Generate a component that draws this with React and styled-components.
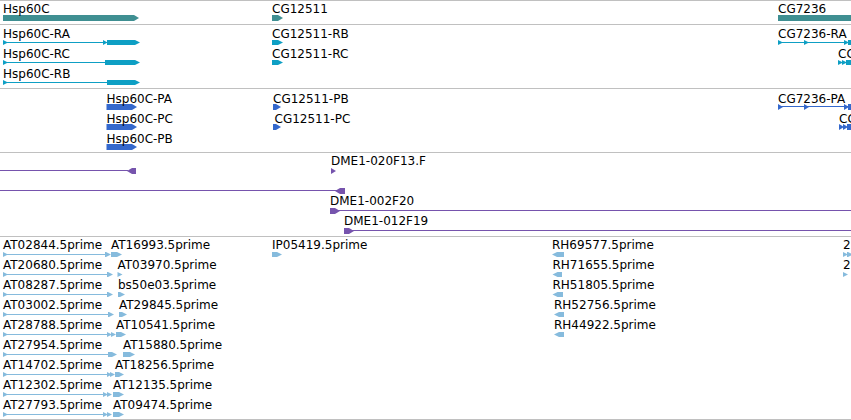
import React from "react";
import styled, { createGlobalStyle } from "styled-components";

const GlobalStyle = createGlobalStyle`
  html, body { margin: 0; padding: 0; background: #ffffff; }
  body { font-family: "DejaVu Sans", Verdana, sans-serif; }
`;

const Browser = styled.main`
  width: 851px;
  height: 420px;
  display: flex;
  flex-direction: column;
  overflow: hidden;
  background: #ffffff;
`;

const Track = styled.section`
  position: relative;
  flex: 0 0 ${(p) => p.$h}px;
  box-sizing: border-box;
  border-top: 1px solid #c0c0c0;
  border-bottom: ${(p) => (p.$last ? "1px solid #c0c0c0" : "none")};
  overflow: hidden;
`;

const GlyphLayer = styled.svg`
  position: absolute;
  left: 0;
  top: 0;
  width: 100%;
  height: 100%;
  display: block;
  overflow: hidden;
`;

const FeatureLabel = styled.span`
  position: absolute;
  font-family: "DejaVu Sans", Verdana, sans-serif;
  font-size: 12px;
  line-height: 14px;
  color: #000000;
  white-space: nowrap;
`;

const ROW = 20;

const TRACKS = [
  {
    id: "gene",
    height: 24,
    color: "#3f8f92",
    row0: 18,
    rise: 14,
    h: 6,
    features: [
      { label: "Hsp60C", row: 0, exons: [[3, 139, "r"]] },
      { label: "CG12511", row: 0, exons: [[272, 283, "r"]] },
      { label: "CG7236", row: 0, exons: [[778, 860, "r"]] },
    ],
  },
  {
    id: "transcript",
    height: 64,
    color: "#0e9fc4",
    row0: 18.5,
    rise: 13.3,
    h: 5,
    features: [
      { label: "Hsp60C-RA", row: 0, line: [3, 107], exons: [[3, 8, "r"], [103, 107.5, "r"], [107, 140, "r"]] },
      { label: "Hsp60C-RC", row: 1, line: [3, 105], exons: [[3, 8, "r"], [105, 140, "r"]] },
      { label: "Hsp60C-RB", row: 2, line: [3, 107], exons: [[3, 8, "r"], [107, 140, "r"]] },
      { label: "CG12511-RB", row: 0, exons: [[272, 283, "r"]] },
      { label: "CG12511-RC", row: 1, exons: [[272, 283, "r"]] },
      { label: "CG7236-RA", row: 0, line: [778, 851], exons: [[778, 783, "r"], [804, 809, "r"], [844, 849, "r"], [848, 860, "r"]] },
      { label: "CG7236-RB", row: 1, exons: [[838, 843, "r"], [842, 847, "r"], [846, 860, "r"]] },
    ],
  },
  {
    id: "protein",
    height: 64,
    color: "#3468cc",
    row0: 19,
    rise: 12.6,
    h: 6,
    features: [
      { label: "Hsp60C-PA", row: 0, exons: [[106.5, 137, "r"]] },
      { label: "Hsp60C-PC", row: 1, exons: [[106.5, 137, "r"]] },
      { label: "Hsp60C-PB", row: 2, exons: [[106.5, 137, "r"]] },
      { label: "CG12511-PB", row: 0, exons: [[273, 281, "r"]] },
      { label: "CG12511-PC", row: 1, lx: 274.5, exons: [[273, 281, "r"]] },
      { label: "CG7236-PA", row: 0, line: [778, 851], exons: [[778, 783, "r"], [804, 809, "r"], [844, 849, "r"], [848, 860, "r"]] },
      { label: "CG7236-PB", row: 1, exons: [[839, 844, "r"], [843, 848, "r"], [847, 860, "r"]] },
    ],
  },
  {
    id: "clone",
    height: 84,
    color: "#7654ad",
    row0: 19,
    rise: 15,
    h: 6,
    features: [
      { row: 0, line: [-5, 128], exons: [[127, 136, "l"]] },
      { label: "DME1-020F13.F", row: 0, exons: [[331, 336, "r"]] },
      { row: 1, line: [-5, 340], exons: [[335, 345, "l"]] },
      { label: "DME1-002F20", row: 2, line: [338, 860], exons: [[330, 340, "r"]] },
      { label: "DME1-012F19", row: 3, line: [352, 860], exons: [[344, 354, "r"]] },
    ],
  },
  {
    id: "est",
    height: 184,
    last: true,
    color: "#86bbdd",
    row0: 18.5,
    rise: 14.6,
    h: 5,
    features: [
      { label: "AT02844.5prime", row: 0, line: [3, 107], exons: [[3, 8, "r"], [105, 111, "r"]] },
      { label: "AT16993.5prime", row: 0, exons: [[111, 122, "r"]] },
      { label: "AT20680.5prime", row: 1, line: [3, 107], exons: [[3, 8, "r"], [107, 113, "r"]] },
      { label: "AT03970.5prime", row: 1, exons: [[117.5, 122.5, "r"]] },
      { label: "AT08287.5prime", row: 2, line: [3, 107], exons: [[3, 8, "r"], [107, 113, "r"]] },
      { label: "bs50e03.5prime", row: 2, exons: [[118, 125, "r"]] },
      { label: "AT03002.5prime", row: 3, line: [3, 108], exons: [[3, 8, "r"], [108, 114, "r"]] },
      { label: "AT29845.5prime", row: 3, exons: [[119, 127, "r"]] },
      { label: "AT28788.5prime", row: 4, line: [3, 107], exons: [[3, 8, "r"], [107, 112, "r"], [111, 116, "r"]] },
      { label: "AT10541.5prime", row: 4, exons: [[116, 126, "r"]] },
      { label: "AT27954.5prime", row: 5, line: [3, 108], exons: [[3, 8, "r"], [108, 117, "r"]] },
      { label: "AT15880.5prime", row: 5, exons: [[123, 135, "r"]] },
      { label: "AT14702.5prime", row: 6, line: [3, 107], exons: [[3, 8, "r"], [107, 112, "r"], [110, 115, "r"]] },
      { label: "AT18256.5prime", row: 6, exons: [[115, 124, "r"]] },
      { label: "AT12302.5prime", row: 7, line: [3, 103], exons: [[3, 8, "r"], [103, 108, "r"], [107, 112, "r"]] },
      { label: "AT12135.5prime", row: 7, exons: [[113, 124, "r"]] },
      { label: "AT27793.5prime", row: 8, line: [3, 103], exons: [[3, 8, "r"], [103, 108, "r"], [107, 112, "r"]] },
      { label: "AT09474.5prime", row: 8, exons: [[113, 124, "r"]] },
      { label: "IP05419.5prime", row: 0, exons: [[272, 282, "r"]] },
      { label: "RH69577.5prime", row: 0, exons: [[552, 564, "l"]] },
      { label: "RH71655.5prime", row: 1, exons: [[552.5, 562, "l"]] },
      { label: "RH51805.5prime", row: 2, exons: [[552.5, 563, "l"]] },
      { label: "RH52756.5prime", row: 3, exons: [[554, 564, "l"]] },
      { label: "RH44922.5prime", row: 4, exons: [[554, 564, "l"]] },
      { label: "2", row: 0, exons: [[843, 848, "r"], [847, 853, "r"]] },
      { label: "2", row: 1, exons: [[843, 848, "r"]] },
    ],
  },
];

function exonPoints(a, b, cy, h, dir) {
  const top = cy - h / 2;
  const bot = cy + h / 2;
  const t = Math.min(5, b - a);
  if (dir === "r") {
    return `${a},${top} ${b - t},${top} ${b},${cy} ${b - t},${bot} ${a},${bot}`;
  }
  if (dir === "l") {
    return `${a},${cy} ${a + t},${top} ${b},${top} ${b},${bot} ${a + t},${bot}`;
  }
  return `${a},${top} ${b},${top} ${b},${bot} ${a},${bot}`;
}

function FeatureGlyph({ feature, cy, h }) {
  return (
    <g>
      {feature.line && (
        <rect
          x={feature.line[0]}
          y={Math.floor(cy - 0.5)}
          width={feature.line[1] - feature.line[0]}
          height={1}
          shapeRendering="crispEdges"
        />
      )}
      {feature.exons.map(([a, b, dir], i) => (
        <polygon key={i} points={exonPoints(a, b, cy, h, dir)} />
      ))}
    </g>
  );
}

function TrackView({ track }) {
  const inner = track.height - 1 - (track.last ? 1 : 0);
  const centerOf = (f) => track.row0 + f.row * ROW;
  const startOf = (f) =>
    f.lx !== undefined ? f.lx : f.exons.length ? Math.min(...f.exons.map((e) => e[0])) : f.line[0];
  return (
    <Track $h={track.height} $last={track.last}>
      <GlyphLayer viewBox={`0 1 851 ${inner}`} preserveAspectRatio="none" fill={track.color}>
        {track.features.map((f, i) => (
          <FeatureGlyph key={i} feature={f} cy={centerOf(f)} h={track.h} />
        ))}
      </GlyphLayer>
      {track.features
        .filter((f) => f.label)
        .map((f, i) => (
          <FeatureLabel
            key={i}
            style={{ left: startOf(f), top: Math.round(centerOf(f) - track.rise - 3.4) }}
          >
            {f.label}
          </FeatureLabel>
        ))}
    </Track>
  );
}

export default function App() {
  return (
    <>
      <GlobalStyle />
      <Browser>
        {TRACKS.map((t) => (
          <TrackView key={t.id} track={t} />
        ))}
      </Browser>
    </>
  );
}
